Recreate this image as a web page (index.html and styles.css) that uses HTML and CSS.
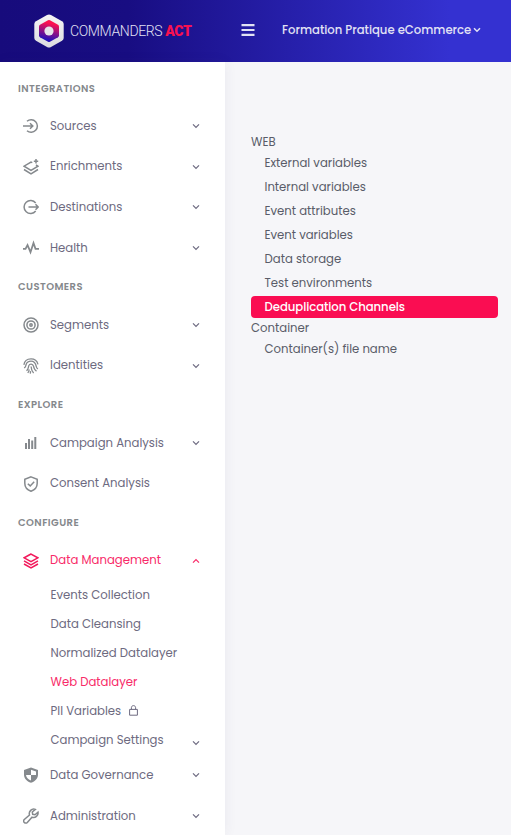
FILE: index.html
```html
<!DOCTYPE html>
<html lang="en">
<head>
<meta charset="utf-8">
<title>Commanders Act</title>
<link rel="stylesheet" href="styles.css">
</head>
<body>
<svg class="defs" width="0" height="0">
  <symbol id="down" viewBox="0 0 8 6"><path d="M1 1.3l3 3 3-3"/></symbol>
</svg>
<header class="topbar">
  <div class="brand">
    <svg class="logo" viewBox="0 0 30 34">
      <defs>
        <linearGradient id="shell" x1="0" y1="0" x2="0" y2="1"><stop offset="0" stop-color="#f5f5f5"/><stop offset="1" stop-color="#dcdce0"/></linearGradient>
        <linearGradient id="core" x1=".6" y1="0" x2=".4" y2="1"><stop offset=".15" stop-color="#fc1150"/><stop offset=".9" stop-color="#2610b8"/></linearGradient>
      </defs>
      <path d="M13 1Q15 0 17 1L28 7.3Q29.7 8.4 29.7 10V24Q29.7 25.7 28 26.7L17 33Q15 34 13 33L2 26.7Q.3 25.7 .3 24V10Q.3 8.4 2 7.3Z" fill="url(#shell)"/>
      <path d="M14 6.3Q15 5.8 16 6.3L24 10.7Q25 11.3 25 12.5V21.5Q25 22.7 24 23.3L16 27.7Q15 28.2 14 27.7L6 23.3Q5 22.7 5 21.5V12.5Q5 11.3 6 10.7Z" fill="url(#core)"/>
      <circle cx="15" cy="17" r="4.6" fill="#e6e4e9"/>
    </svg>
    <span class="wordmark">COMMANDERS <b>ACT</b></span>
  </div>
  <svg class="burger" viewBox="0 0 14 12"><path d="M.5 1.2h13M.5 6h13M.5 10.8h13"/></svg>
  <div class="account"><span>Formation Pratique eCommerce</span><svg class="caret"><use href="#down"/></svg></div>
</header>
<div class="layout">
  <nav class="sidebar">
    <h2 class="first">INTEGRATIONS</h2>
    <a class="item"><svg class="icon" viewBox="0 0 16 16"><path d="M4 3.2a6.3 6.3 0 1 1 0 9.6M0 8h9.500M7 5.300L9.800 8 7 10.700"/></svg><span>Sources</span><svg class="chev"><use href="#down"/></svg></a>
    <a class="item"><svg class="icon" viewBox="0 0 16 16"><path d="M9.300 3.600L8 3 1 7.200l7 4.200 7-4.200-2-1.200M1 10.500l7 4.300 7-4.300M13 0v4.400M10.800 2.200h4.400"/></svg><span>Enrichments</span><svg class="chev"><use href="#down"/></svg></a>
    <a class="item"><svg class="icon" viewBox="0 0 16 16"><path d="M12.700 4a6.500 6.500 0 1 0 0 8M5.500 8H15M12.500 5.300L15.200 8l-2.700 2.700"/></svg><span>Destinations</span><svg class="chev"><use href="#down"/></svg></a>
    <a class="item"><svg class="icon pulse" viewBox="0 0 16 16"><path d="M0 8.800h2.500L4.500 5l3 7.200L10.500 3l2 5.800H16"/></svg><span>Health</span><svg class="chev"><use href="#down"/></svg></a>
    <h2>CUSTOMERS</h2>
    <a class="item"><svg class="icon" viewBox="0 0 16 16"><circle cx="8" cy="8" r="7"/><circle cx="8" cy="8" r="4.1"/><circle cx="8" cy="8" r="1.2"/></svg><span>Segments</span><svg class="chev"><use href="#down"/></svg></a>
    <a class="item"><svg class="icon print" viewBox="0 0 16 16"><path d="M.9 6.800C1.500 2.800 4.500.8 8 .8c3.800 0 6.200 2.400 7 5.500M1.100 10c1.800-.7 1.500-2.200 2-3.500C4 4 6 3.200 8 3.200c3.500 0 4.800 2.800 5.300 5.300.2 1.200.7 2 1.600 2.500M3.500 12.800c2.200-1.700 1.800-3.800 2.300-5.200.8-2.200 4-2 4.600.3.400 2 .8 4.100 3.100 5.300M8.100 8.500c0 2.500.7 4.300 2.500 6.700M6.200 11.500c-.1 1.300-.6 2.500-1.500 3.400M7.600 13.200l-.3 2.400"/></svg><span>Identities</span><svg class="chev"><use href="#down"/></svg></a>
    <h2>EXPLORE</h2>
    <a class="item"><svg class="icon solid" viewBox="0 0 16 16"><path d="M2 8h2v6H2zM5 4h2v10H5zM8.200 5.500h2V14h-2zM11.300 2h2v12h-2z"/></svg><span>Campaign Analysis</span><svg class="chev"><use href="#down"/></svg></a>
    <a class="item"><svg class="icon" viewBox="0 0 16 16"><path d="M8 .9l6.200 2.400v4C14.200 11 12 13.800 8 15.200 4 13.800 1.800 11 1.800 7.300v-4zM4.800 7.700l2.400 2.200 4-4.200"/></svg><span>Consent Analysis</span></a>
    <h2>CONFIGURE</h2>
    <a class="item active"><svg class="icon" viewBox="0 0 16 16"><path d="M8 1L1.200 4.800 8 8.700l6.800-3.900zM1 7.800l7 4 7-4M1 11l7 4 7-4"/></svg><span>Data Management</span><svg class="chev up"><use href="#down"/></svg></a>
    <a class="sub">Events Collection</a>
    <a class="sub">Data Cleansing</a>
    <a class="sub">Normalized Datalayer</a>
    <a class="sub active">Web Datalayer</a>
    <a class="sub">PII Variables<svg class="lock" viewBox="0 0 9 11"><path d="M.6 4.400h7.800v5.800H.6zM2.400 4.400V2.700C2.400-.1 6.600-.1 6.600 2.700v1.700"/></svg></a>
    <a class="sub">Campaign Settings<svg class="chev low"><use href="#down"/></svg></a>
    <a class="item"><svg class="icon solid" viewBox="0 0 16 16"><path fill-rule="evenodd" d="M8 .4l7 2.700v4.400c0 4-2.700 6.900-7 8.200-4.300-1.300-7-4.200-7-8.200V3.100zM8 2.700V8h5V4.500zM8 8H3c.3 2.600 2 4.500 5 5.500z"/></svg><span>Data Governance</span><svg class="chev"><use href="#down"/></svg></a>
    <a class="item"><svg class="icon" viewBox="0 0 16 16"><path d="M12.300 1.400A4.500 4.500 0 0 0 6.500 7L1.300 11.500a2 2 0 0 0 3 3L9 9.200a4.500 4.500 0 0 0 6-5L12 6.800 9.700 6.300 9.300 4z"/></svg><span>Administration</span><svg class="chev"><use href="#down"/></svg></a>
  </nav>
  <main class="content">
    <div class="group">WEB</div>
    <ul>
      <li>External variables</li>
      <li>Internal variables</li>
      <li>Event attributes</li>
      <li>Event variables</li>
      <li>Data storage</li>
      <li>Test environments</li>
      <li class="selected">Deduplication Channels</li>
    </ul>
    <div class="group">Container</div>
    <ul>
      <li>Container(s) file name</li>
    </ul>
  </main>
</div>
</body>
</html>
```

FILE: styles.css
```css
* { box-sizing: border-box; }
body {
  margin: 0;
  height: 835px;
  overflow: hidden;
  background: #f6f6f9;
  color: #6d6a80;
  font-family: Poppins, Inter, sans-serif;
  font-size: 11.7px;
}
svg { flex: none; fill: none; stroke: currentColor; }
.defs { position: absolute; }
.topbar {
  display: flex;
  align-items: center;
  height: 62px;
  padding-left: 34px;
  padding-bottom: 1px;
  color: #e2e2f4;
  background: linear-gradient(90deg, #170b7c 0, #180d82 25%, #3431d1 88%, #3431d1 100%);
}
.brand { display: flex; align-items: center; width: 207px; }
.logo { width: 30px; height: 34px; stroke: none; }
.wordmark {
  margin-left: 6px;
  font: 300 14px Roboto, sans-serif;
  letter-spacing: -.37px;
  white-space: nowrap;
}
.wordmark b { color: #f91150; font-weight: 900; }
.burger { width: 14px; height: 12px; margin-top: -1px; stroke-width: 2.2; }
.account { display: flex; align-items: center; margin-left: 27px; font-weight: 500; font-size: 11.65px; white-space: nowrap; }
.caret { width: 8px; height: 6px; margin: -2px 0 0 2px; stroke-width: 1.5; }
.layout { display: flex; height: 773px; }
.sidebar {
  width: 225px;
  padding-top: 7.4px;
  background: #fff;
  box-shadow: 0 0 12px rgba(60, 60, 100, .07);
}
.sidebar h2 {
  display: flex;
  align-items: center;
  height: 36.6px;
  margin: 0;
  padding: .6px 0 0 18px;
  color: #85888c;
  font-size: 10px;
  font-weight: 600;
  letter-spacing: .42px;
}
.sidebar .first { padding-top: 3px; }
.item { display: flex; align-items: center; height: 40.6px; padding: 0 25px 0 23px; }
.icon { width: 16px; height: 16px; margin-right: 11px; color: #85898d; stroke-width: 1.5; }
.icon.solid { fill: currentColor; stroke: none; }
.icon.print { stroke-width: 1.3; }
.icon.pulse { stroke-width: 1.8; }
.chev { width: 8px; height: 6px; margin-left: auto; stroke-width: 1.2; }
.chev.up { transform: scaleY(-1); }
.chev.low { position: relative; top: 2px; }
.sub { display: flex; align-items: center; height: 29px; padding: 0 25px 0 50.5px; }
.active { color: #f82a68; }
.active .icon { color: #f2195b; }
.lock { width: 9px; height: 11px; margin-left: 8px; margin-bottom: 2px; stroke-width: 1; }
.content { flex: 1; padding: 71px 13px 0 26px; color: #595c68; }
.group { height: 19px; line-height: 19px; }
.content ul { margin: 0; padding: 0; list-style: none; }
.content li { height: 22px; margin: 0 0 2px; padding-left: 13.5px; line-height: 22px; border-radius: 4px; }
.content li.selected { margin-bottom: 1px; color: #fff; background: #fa0d52; font-weight: 500; letter-spacing: -.06px; }
```
